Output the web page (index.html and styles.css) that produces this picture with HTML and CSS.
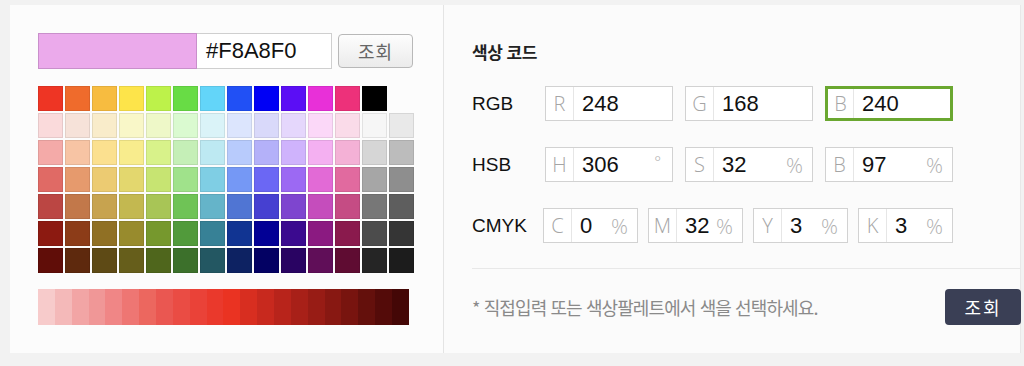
FILE: index.html
```html
<!DOCTYPE html>
<html lang="ko">
<head>
    <meta charset="UTF-8">
    <meta name="viewport" content="width=device-width, initial-scale=1.0">
    <title>색상 코드</title>
    <link rel="stylesheet" href="styles.css">
</head>
<body>
    <div class="picker">
        <div class="palette-side">
            <div class="current">
                <div class="current-swatch"></div>
                <div class="hex-input">#F8A8F0</div>
                <button class="btn-light">조회</button>
            </div>
            <div class="palette" id="palette"></div>
            <div class="shades" id="shades"></div>
        </div>
        <div class="code-side">
            <h2 class="code-title">색상 코드</h2>
            <div class="code-row">
                <span class="code-label">RGB</span>
                <div class="field"><span class="field-key">R</span><span class="field-val">248</span></div>
                <div class="field"><span class="field-key">G</span><span class="field-val">168</span></div>
                <div class="field active"><span class="field-key">B</span><span class="field-val">240</span></div>
            </div>
            <div class="code-row">
                <span class="code-label">HSB</span>
                <div class="field"><span class="field-key">H</span><span class="field-val">306</span><span class="field-deg">°</span></div>
                <div class="field"><span class="field-key">S</span><span class="field-val">32</span><span class="field-unit">%</span></div>
                <div class="field"><span class="field-key">B</span><span class="field-val">97</span><span class="field-unit">%</span></div>
            </div>
            <div class="code-row cmyk">
                <span class="code-label">CMYK</span>
                <div class="field small"><span class="field-key">C</span><span class="field-val">0</span><span class="field-unit">%</span></div>
                <div class="field small"><span class="field-key">M</span><span class="field-val">32</span><span class="field-unit">%</span></div>
                <div class="field small"><span class="field-key">Y</span><span class="field-val">3</span><span class="field-unit">%</span></div>
                <div class="field small"><span class="field-key">K</span><span class="field-val">3</span><span class="field-unit">%</span></div>
            </div>
            <div class="code-footer">
                <p class="code-note">* 직접입력 또는 색상팔레트에서 색을 선택하세요.</p>
                <button class="btn-dark">조회</button>
            </div>
        </div>
    </div>

    <script>
        const rows = [
            ['#ee3524', '#ef6b2c', '#f7bc40', '#fde44a', '#bdf24a', '#68dc45', '#63d5f9', '#2150f5', '#0000f5', '#5b0ef5', '#e830d8', '#ed317a', '#000000', null],
            ['#fadadb', '#f6e2d9', '#f9ecca', '#f9f7c8', '#eef8c8', '#dafad0', '#daf3f8', '#dce5fd', '#d9d9fa', '#e5d7fc', '#fbd8f8', '#fadbe9', '#f6f6f6', '#e9e9e9'],
            ['#f4aaa8', '#f7c4a4', '#fbe08f', '#f8ec8d', '#d8f28a', '#c5efb7', '#bde9f2', '#b8cbfc', '#b4b1f9', '#cfb3fc', '#f4b0f1', '#f4b1d6', '#d6d6d6', '#bcbcbc'],
            ['#e06a65', '#e69a6d', '#eccb72', '#e3d76e', '#c7e472', '#a0e28b', '#7fcee4', '#7598f5', '#6b67f4', '#9c69f3', '#e26ad6', '#e16a9f', '#a6a6a6', '#8e8e8e'],
            ['#bb4643', '#c2784a', '#c7a34f', '#c3b850', '#a8c556', '#6fc356', '#65b4c9', '#5075d3', '#4640d1', '#7e45cf', '#c54dbc', '#c54c84', '#777777', '#5e5e5e'],
            ['#8c1a11', '#8c3c18', '#907024', '#988b2d', '#76982d', '#519a3b', '#378196', '#113492', '#020095', '#3b0a8f', '#8b1a81', '#8a1a4d', '#4c4c4c', '#353535'],
            ['#600d08', '#5e290d', '#5e4a15', '#665e1b', '#4f661c', '#3c702b', '#235762', '#0d2262', '#030163', '#290362', '#600e58', '#5f0c32', '#252525', '#1c1c1c']
        ];
        const shades = ['#f7cbcb', '#f4b9b9', '#f2a5a5', '#f09797', '#f08686', '#ee7673', '#ec675f', '#ea5751', '#ea4c44', '#ea4238', '#ea392c',
            '#ea3322', '#d82e20', '#c8291e', '#b8241b', '#a82018', '#981c15', '#881812', '#78140f', '#64100c', '#540b09', '#440706'];

        const palette = document.getElementById('palette');
        rows.forEach(row => {
            row.forEach(color => {
                const cell = document.createElement('span');
                cell.className = color ? 'cell' : 'cell empty';
                if (color) cell.style.background = color;
                palette.appendChild(cell);
            });
        });

        const bar = document.getElementById('shades');
        shades.forEach(color => {
            const step = document.createElement('span');
            step.className = 'shade';
            step.style.background = color;
            bar.appendChild(step);
        });
    </script>
</body>
</html>
```

FILE: styles.css
```css
body {
    margin: 0;
    background-color: #f2f2f2;
    font-family: "Liberation Sans", "Noto Sans CJK KR", sans-serif;
    color: #111;
}

.picker {
    display: flex;
    margin: 5px 0 0 10px;
    width: 1011px;
    height: 348px;
    background-color: #fcfcfc;
}

/* left: palette */
.palette-side {
    width: 433px;
    box-sizing: border-box;
    padding: 28px 0 0 28px;
}

.current {
    display: flex;
    align-items: center;
}

.current-swatch {
    width: 159px;
    height: 36px;
    box-sizing: border-box;
    border: 1px solid #c98fcb;
    background-color: #ebaaeb;
}

.hex-input {
    width: 135px;
    height: 36px;
    box-sizing: border-box;
    border: 1px solid #cfcfcf;
    border-left: none;
    background-color: #fff;
    padding-left: 9px;
    font-size: 22px;
    line-height: 34px;
}

.btn-light {
    margin-left: 6px;
    width: 75px;
    height: 34px;
    border: 1px solid #b8b8b8;
    border-radius: 4px;
    background: linear-gradient(#fdfdfd, #ebebeb);
    color: #666;
    font-family: "Noto Sans CJK KR", sans-serif;
    font-size: 18px;
    letter-spacing: 1px;
    padding: 0;
    cursor: pointer;
}

.palette {
    display: grid;
    grid-template-columns: repeat(14, 25px);
    grid-auto-rows: 25px;
    gap: 2px;
    margin-top: 17px;
}

.cell {
    box-shadow: inset 0 0 0 1px rgba(0, 0, 0, 0.08);
}

.cell.empty {
    box-shadow: none;
}

.shades {
    display: flex;
    width: 371px;
    height: 36px;
    margin-top: 16px;
}

.shade {
    flex: 1;
}

/* right: code fields */
.code-side {
    flex: 1;
    border-left: 1px solid #e4e4e4;
    border-right: 1px solid #e8e8e8;
    background-color: #fbfbfb;
    padding: 37px 0 0 28px;
}

.code-title {
    margin: 0 0 24px;
    font-family: "Noto Sans CJK KR", sans-serif;
    font-size: 17px;
    font-weight: bold;
    line-height: 20px;
    letter-spacing: -0.5px;
    color: #222;
}

.code-row {
    display: flex;
    align-items: center;
    gap: 12px;
    margin-bottom: 26px;
}

.code-row.cmyk {
    gap: 10px;
    margin-bottom: 25px;
}

.code-label {
    width: 61px;
    font-size: 19px;
    color: #111;
}

.field {
    display: flex;
    align-items: center;
    width: 128px;
    height: 35px;
    box-sizing: border-box;
    border: 1px solid #d2d2d2;
    background-color: #fff;
}

.field.small {
    width: 95px;
}

.field.active {
    border: 3px solid #6aa730;
}

.field-key {
    width: 28px;
    height: 100%;
    box-sizing: border-box;
    border-right: 1px solid #e6e6e6;
    text-align: center;
    font-family: "Open Sans", sans-serif;
    font-weight: 300;
    font-size: 20px;
    line-height: 33px;
    color: #a5a5a5;
}

.field.active .field-key {
    width: 26px;
    line-height: 29px;
}

.field-val {
    flex: 1;
    padding-left: 8px;
    padding-top: 1px;
    font-size: 22px;
}

.field-unit {
    margin-right: 9px;
    font-family: "Open Sans", sans-serif;
    font-weight: 300;
    font-size: 21px;
    color: #b0b0b0;
}

.field-deg {
    align-self: flex-start;
    margin: 3px 11px 0 0;
    font-family: "Open Sans", sans-serif;
    font-weight: 300;
    font-size: 16px;
    color: #b0b0b0;
}

.code-footer {
    display: flex;
    justify-content: space-between;
    align-items: center;
    border-top: 1px solid #e8e8e8;
    padding-top: 20px;
}

.code-note {
    margin: 0;
    font-family: "Noto Sans CJK KR", sans-serif;
    font-size: 18px;
    letter-spacing: -0.9px;
    color: #8a8a8a;
}

.btn-dark {
    width: 76px;
    height: 36px;
    margin-right: -1px;
    border: none;
    border-radius: 4px;
    background-color: #3a3f55;
    color: #fff;
    font-family: "Noto Sans CJK KR", sans-serif;
    font-size: 18px;
    letter-spacing: 2px;
    padding: 0;
    cursor: pointer;
}
```
